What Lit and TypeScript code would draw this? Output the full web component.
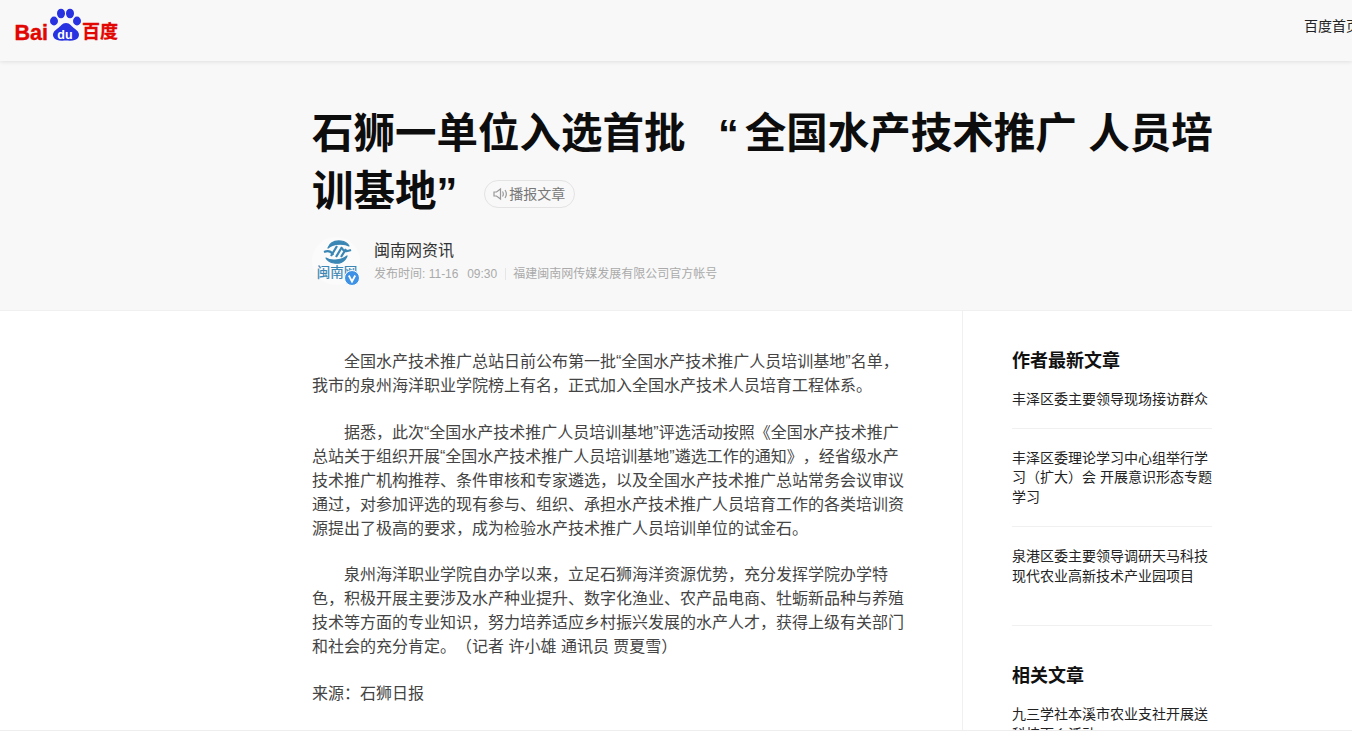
import { LitElement, css, html } from 'lit';
import { customElement } from 'lit/decorators.js';

const paragraphs = [
    '全国水产技术推广总站日前公布第一批“全国水产技术推广人员培训基地”名单，我市的泉州海洋职业学院榜上有名，正式加入全国水产技术人员培育工程体系。',
    '据悉，此次“全国水产技术推广人员培训基地”评选活动按照《全国水产技术推广总站关于组织开展“全国水产技术推广人员培训基地”遴选工作的通知》，经省级水产技术推广机构推荐、条件审核和专家遴选，以及全国水产技术推广总站常务会议审议通过，对参加评选的现有参与、组织、承担水产技术推广人员培育工作的各类培训资源提出了极高的要求，成为检验水产技术推广人员培训单位的试金石。',
    '泉州海洋职业学院自办学以来，立足石狮海洋资源优势，充分发挥学院办学特色，积极开展主要涉及水产种业提升、数字化渔业、农产品电商、牡蛎新品种与养殖技术等方面的专业知识，努力培养适应乡村振兴发展的水产人才，获得上级有关部门和社会的充分肯定。（记者 许小雄 通讯员 贾夏雪）'
];

const latest = [
    '丰泽区委主要领导现场接访群众',
    '丰泽区委理论学习中心组举行学习（扩大）会 开展意识形态专题学习',
    '泉港区委主要领导调研天马科技现代农业高新技术产业园项目'
];

@customElement('app-root')
export class AppRoot extends LitElement {
    static styles = css`
        :host {
            display: block;
            position: relative;
            width: 1352px;
            height: 736px;
            overflow: hidden;
            background: #fff;
            color: #333;
            font-family: 'Liberation Sans', 'Noto Sans CJK SC', sans-serif;
            text-spacing-trim: space-all;
        }

        .nav {
            position: relative;
            display: flex;
            align-items: center;
            justify-content: space-between;
            height: 61px;
            padding-left: 14px;
            background: #f8f8f8;
            box-shadow: 0 1px 4px rgba(0, 0, 0, 0.1);
        }

        .logo {
            display: block;
            align-self: flex-start;
            width: 106px;
            height: 36px;
            margin-top: 6px;
        }

        .home {
            flex: none;
            margin-right: -8px;
            margin-top: -12px;
            font-size: 14px;
            white-space: nowrap;
            color: #222;
        }

        .head {
            height: 250px;
            box-sizing: border-box;
            padding: 44px 130px 0 312px;
            background: #f8f8f8;
            border-bottom: 1px solid #f0f0f0;
        }

        h1 {
            margin: 0;
            font-size: 41.5px;
            line-height: 58px;
            font-weight: 700;
            color: #0d0d0d;
        }

        .open-quote {
            margin: 0 6px 0 21px;
        }

        .listen {
            display: inline-flex;
            align-items: center;
            gap: 1px;
            box-sizing: border-box;
            height: 28px;
            padding: 0 9px 0 8px;
            margin-left: 27px;
            vertical-align: 5px;
            border: 1px solid #e3e3e3;
            border-radius: 14px;
            font-size: 14px;
            line-height: 26px;
            font-weight: 400;
            color: #777;
        }

        .author {
            display: flex;
            gap: 14px;
            margin-top: 16px;
        }

        .avatar {
            flex: none;
            display: block;
            width: 48px;
            height: 50px;
        }

        .name {
            margin-top: 2px;
            font-size: 16px;
            line-height: 24px;
            color: #333;
        }

        .meta {
            display: flex;
            align-items: center;
            margin-top: 2px;
            font-size: 12px;
            line-height: 18px;
            color: #aaa;
        }

        .time {
            margin-left: 2px;
        }

        .org {
            margin-left: 8px;
            padding-left: 7px;
            border-left: 1px solid #e6e6e6;
            line-height: 12px;
        }

        .main {
            display: flex;
            padding-left: 312px;
        }

        .article {
            width: 600px;
            padding-top: 39px;
            padding-right: 50px;
            font-size: 16px;
            line-height: 24px;
            color: #444;
        }

        .article p {
            margin: 0 0 22.5px;
            text-indent: 32px;
        }

        .article .source {
            text-indent: 0;
        }

        .side {
            flex: none;
            width: 200px;
            padding: 37px 140px 0 49px;
            border-left: 1px solid #f0f0f0;
        }

        h2 {
            margin: 0 0 16px;
            font-size: 18px;
            line-height: 26px;
            font-weight: 700;
            color: #111;
        }

        .item {
            font-size: 14px;
            line-height: 19.5px;
            color: #222;
            padding-bottom: 19px;
            margin-bottom: 20px;
            border-bottom: 1px solid #f0f0f0;
        }

        .item:first-of-type {
            padding-bottom: 18px;
        }

        .item:last-child {
            min-height: 59px;
        }

        .side section + section {
            margin-top: 37px;
        }

        .bottom {
            position: absolute;
            left: 0;
            right: 0;
            bottom: 0;
            height: 5px;
            background: #fff;
            border-top: 1px solid #eee;
        }
    `;

    render() {
        return html`
            <div class="nav">
                <svg class="logo" viewBox="0 0 106 36">
                    <text x="0.500" y="34" font-size="21.500" font-weight="700" fill="#e10601" stroke="#e10601" stroke-width="0.4" font-family="Liberation Sans">Bai</text>
                    <ellipse cx="40" cy="15" rx="4" ry="4.400" fill="#2932e1" />
                    <ellipse cx="47" cy="7.500" rx="4" ry="4.800" fill="#2932e1" />
                    <ellipse cx="56" cy="7.500" rx="4" ry="4.800" fill="#2932e1" />
                    <ellipse cx="63" cy="15" rx="4" ry="4.400" fill="#2932e1" />
                    <path d="M52 17c4 0 5.500 3.500 8.500 5.500 3.500 2.500 5.500 5 4 8.500-1.500 3.500-6 4-12.500 3.500-6.500.5-11 0-12.500-3.500-1.500-3.500.5-6 4-8.500 3-2 4.500-5.500 8.500-5.500z" fill="#2932e1" />
                    <text x="51" y="33" text-anchor="middle" font-size="12.500" font-weight="700" fill="#fff" font-family="Liberation Sans">du</text>
                    <text x="68" y="32" font-size="18" font-weight="700" fill="#e10601" stroke="#e10601" stroke-width="0.3" font-family="Noto Sans CJK SC">百度</text>
                </svg>
                <span class="home">百度首页</span>
            </div>
            <div class="head">
                <h1>
                    石狮一单位入选首批 <span class="open-quote">“</span>全国水产技术推广 人员培训基地”<span class="listen">
                        <svg width="15" height="14" viewBox="0 0 15 14" fill="none" stroke="#999" stroke-width="1.200">
                            <path d="M1 5h2.500l4-3v10l-4-3h-2.500z" />
                            <path d="M9.500 4.500c1 1.500 1 3.500 0 5M12 3c1.700 2.500 1.700 5.500 0 8" />
                        </svg>
                        播报文章
                    </span>
                </h1>
                <div class="author">
                    <svg class="avatar" viewBox="0 0 48 50">
                        <circle cx="24" cy="24" r="24" fill="#fbfbfb" />
                        <g fill="#3a86b4" stroke="#3a86b4" stroke-width="1.200" stroke-linejoin="round">
                            <path d="M16 11C18 5 24 3.500 29 4c4 .5 7 3 8 5-4-2.500-15-3-21 2z" />
                            <path d="M35 19c-2 6-8 8-13 7-4-.5-7-3-8-5 4 3 15 3 21-2z" />
                        </g>
                        <g fill="none" stroke="#3a86b4" stroke-width="2.200">
                            <path d="M12 15c5-2 8 0 9 3M39 13c-5 2-8 1-9-2" />
                            <path d="M19 19l6-10M24 20l6-10M29 20l5-8" />
                        </g>
                        <text x="25" y="40" text-anchor="middle" font-size="13.500" fill="#3a86b4" stroke="#3a86b4" stroke-width="0.2" font-family="Noto Sans CJK SC">闽南网</text>
                        <circle cx="40" cy="41" r="7.500" fill="#3d92e6" stroke="#fff" />
                        <path d="M36.800 38.500l3.200 6 3.200-6" fill="none" stroke="#fff" stroke-width="1.800" />
                    </svg>
                    <div>
                        <div class="name">闽南网资讯</div>
                        <div class="meta">
                            <span>发布时间: 11-16&nbsp;</span>
                            <span class="time">&nbsp;09:30</span>
                            <span class="org">福建闽南网传媒发展有限公司官方帐号</span>
                        </div>
                    </div>
                </div>
            </div>
            <div class="main">
                <div class="article">
                    ${paragraphs.map((p) => html`<p>${p}</p>`)}
                    <p class="source">来源：石狮日报</p>
                </div>
                <div class="side">
                    <section>
                        <h2>作者最新文章</h2>
                        ${latest.map((t) => html`<div class="item">${t}</div>`)}
                    </section>
                    <section>
                        <h2>相关文章</h2>
                        <div class="item">九三学社本溪市农业支社开展送科技下乡活动</div>
                    </section>
                </div>
            </div>
            <div class="bottom"></div>
        `;
    }
}
